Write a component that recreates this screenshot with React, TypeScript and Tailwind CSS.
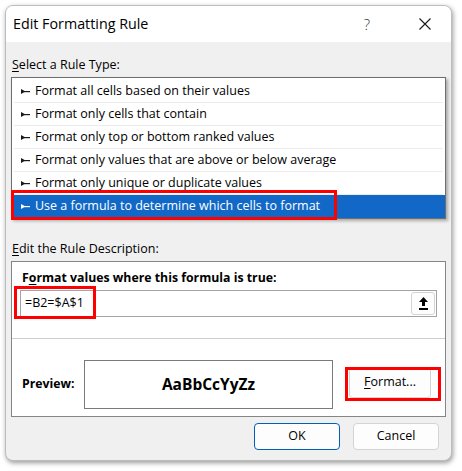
import * as React from "react"

const font = { fontFamily: '"Open Sans", "Noto Sans", sans-serif' }

const rules = [
  "Format all cells based on their values",
  "Format only cells that contain",
  "Format only top or bottom ranked values",
  "Format only values that are above or below average",
  "Format only unique or duplicate values",
  "Use a formula to determine which cells to format",
]

function Pointer({ light }: { light?: boolean }) {
  const c = light ? "#ffffff" : "#1a1a1a"
  return (
    <svg width="9" height="5" viewBox="0 0 9 5" className="shrink-0">
      <polygon points="0,0 0,5 4.5,2.5" fill={c} />
      <rect x="3" y="2" width="6" height="1.2" fill={c} />
    </svg>
  )
}

function RuleRow({ text, selected }: { text: string; selected?: boolean }) {
  return (
    <div
      className={
        selected
          ? "flex h-[23px] items-center gap-[5px] bg-[#1168c6] pl-[9px] text-white"
          : "flex h-[22px] items-center gap-[5px] pl-[7px] text-black"
      }
    >
      <Pointer light={selected} />
      <span className="leading-none">{text}</span>
    </div>
  )
}

export default function App() {
  return (
    <div className="h-[471px] w-[462px] bg-white pl-[5px] pt-[5px] text-[12.5px] text-black" style={font}>
      <div className="flex h-[456px] w-[447px] flex-col overflow-hidden rounded-[8px] border border-[#bdbdbd] bg-[#f0f0f0] shadow-[1px_2px_5px_rgba(0,0,0,0.4)]">
        {/* title bar */}
        <div className="flex h-[36px] shrink-0 items-center bg-white pl-[7px] pr-[20px]">
          <span className="text-[14.3px]">Edit Formatting Rule</span>
          <span className="ml-auto mr-[49px] text-[15px] font-light text-[#333]">?</span>
          <svg width="12" height="12" viewBox="0 0 12 12">
            <path d="M0.5 0.5 L11.5 11.5 M11.5 0.5 L0.5 11.5" stroke="#1a1a1a" strokeWidth="1.1" />
          </svg>
        </div>

        <div className="flex flex-1 flex-col px-[5px]">
          <div className="mt-[14px] pl-[1px] leading-[18px]">
            <span className="underline underline-offset-2">S</span>elect a Rule Type:
          </div>

          {/* rule list */}
          <div className="relative mt-[3px] h-[142px] border border-[#6e6e6e] bg-white pt-[2px] shadow-[2px_2px_3px_rgba(0,0,0,0.3)]">
            {rules.map((r, i) => (
              <div key={r} className={i < 5 ? "mx-[2px] border-b border-[#ececec]" : ""}>
                <RuleRow text={r} selected={i === 5} />
              </div>
            ))}
            <div className="absolute left-[-1px] top-[112px] h-[30px] w-[326px] border-[3px] border-[#ff0000]" />
          </div>

          <div className="mt-[21px] pl-[1px] leading-[18px]">
            <span className="underline underline-offset-2">E</span>dit the Rule Description:
          </div>

          {/* description */}
          <div className="mt-[3px] flex h-[156px] flex-col border border-[#858585] bg-white px-[8px]">
            <div className="mt-[7px] pl-[2px] text-[12.3px] font-bold leading-[18px]">
              F<span className="underline underline-offset-2">o</span>rmat values where this formula is true:
            </div>
            <div className="relative mt-[3px] flex h-[27px] items-center border border-[#a3a3a3] pl-[4px] pr-[1px]">
              <span>=B2=$A$1</span>
              <button className="ml-auto flex h-[23px] w-[24px] items-center justify-center rounded-[3px] border border-[#d4d4d4] bg-[#fdfdfd]">
                <svg width="9" height="13" viewBox="0 0 9 13">
                  <polygon points="4.5,0 9,5 6,5 6,9 3,9 3,5 0,5" fill="#000" />
                  <rect x="0" y="11" width="9" height="2" fill="#000" />
                </svg>
              </button>
              <div className="absolute left-[-7px] top-[-5px] h-[33px] w-[82px] border-[3px] border-[#ff0000]" />
            </div>
            <div className="mx-[-8px] mt-[21px] h-px bg-[#cdcdcd]" />
            <div className="mt-[21px] flex items-center">
              <span className="w-[64px] pl-[2px] text-[12.3px] font-bold">Preview:</span>
              <div className="flex h-[49px] w-[249px] items-center justify-center border border-[#7a7a7a] text-[15.5px] font-bold">
                AaBbCcYyZz
              </div>
              <div className="relative mb-[4px] ml-[16px]">
                <button className="flex h-[30px] w-[82px] items-center justify-center rounded-[3px] border border-[#d4d4d4] bg-[#fdfdfd]">
                  <span>
                    <span className="underline underline-offset-2">F</span>ormat...
                  </span>
                </button>
                <div className="absolute left-[-4px] top-[-1px] h-[34px] w-[96px] border-[3px] border-[#ff0000]" />
              </div>
            </div>
          </div>

          <div className="mt-[6px] flex justify-end gap-[13px] pr-[7px]">
            <button className="h-[27px] w-[86px] rounded-[4px] border border-[#005fb8] bg-[#fdfdfd]">OK</button>
            <button className="h-[27px] w-[86px] rounded-[4px] border border-[#d4d4d4] bg-[#fdfdfd]">Cancel</button>
          </div>
        </div>
      </div>
    </div>
  )
}
